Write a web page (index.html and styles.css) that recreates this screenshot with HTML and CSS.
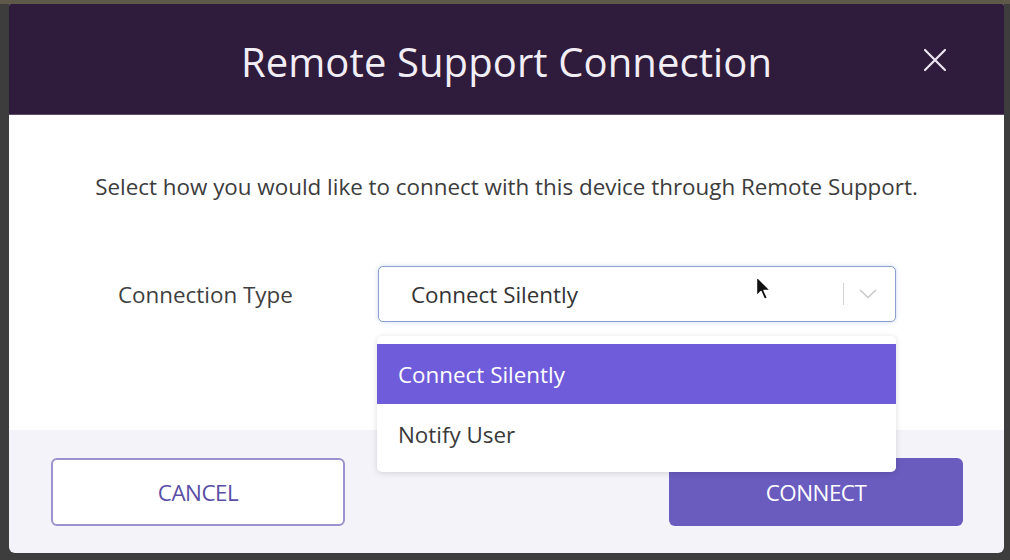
FILE: index.html
```html
<!DOCTYPE html>
<html lang="en">
<head>
    <meta charset="UTF-8">
    <meta name="viewport" content="width=device-width, initial-scale=1.0">
    <title>Remote Support Connection</title>
    <link rel="stylesheet" href="styles.css">
</head>
<body>
    <div class="modal">
        <header class="modal-header">
            <h1>Remote Support Connection</h1>
            <button class="close-btn" aria-label="Close">
                <svg width="24" height="24" viewBox="0 0 24 24">
                    <path d="M2 2 L22 22 M22 2 L2 22" stroke="#ece6f2" stroke-width="2.2" stroke-linecap="round"/>
                </svg>
            </button>
        </header>
        <div class="modal-body">
            <p class="intro">Select how you would like to connect with this device through Remote Support.</p>
            <div class="field-row">
                <label class="field-label">Connection Type</label>
                <div class="select-wrap">
                    <div class="select-box">
                        <span class="select-value">Connect Silently</span>
                        <span class="select-sep"></span>
                        <svg class="chevron" width="18" height="10" viewBox="0 0 18 10">
                            <path d="M1 1 L9 8.5 L17 1" fill="none" stroke="#c9c9c9" stroke-width="1.6"/>
                        </svg>
                    </div>
                    <ul class="select-menu">
                        <li class="option active">Connect Silently</li>
                        <li class="option">Notify User</li>
                    </ul>
                    <svg class="cursor" width="20" height="28" viewBox="0 0 20 28">
                        <path d="M1.5 1.5 L1.5 21 L6 16.5 L9.5 24.5 L12.5 23 L9 15.5 L15.5 15.5 Z" fill="#111" stroke="#fff" stroke-width="1.4" stroke-linejoin="round"/>
                    </svg>
                </div>
            </div>
        </div>
        <footer class="modal-footer">
            <button class="btn btn-cancel">CANCEL</button>
            <button class="btn btn-connect">CONNECT</button>
        </footer>
    </div>
</body>
</html>
```

FILE: styles.css
```css
body {
    margin: 0;
    padding: 4px 6px 7px 9px;
    font-family: "Open Sans", "Noto Sans", sans-serif;
    background: linear-gradient(#5f5949 0, #5f5949 4px, #3d3d3d 4px);
    height: 560px;
    box-sizing: border-box;
    overflow: hidden;
}
.modal {
    width: 995px;
    height: 549px;
    display: flex;
    flex-direction: column;
    background: #f4f3f9;
    border-radius: 2px 2px 6px 6px;
    overflow: hidden;
}
.modal-header {
    height: 110px;
    flex: none;
    background: #2f1b3b;
    border-bottom: 1px solid #5c4a68;
    display: flex;
    align-items: center;
    justify-content: center;
    position: relative;
}
.modal-header h1 {
    margin: 4px 0 0 0;
    font-size: 40px;
    font-weight: 400;
    color: #f2eef6;
    letter-spacing: 0.1px;
}
.close-btn {
    position: absolute;
    right: 57px;
    top: 44px;
    background: none;
    border: none;
    padding: 0;
    width: 24px;
    height: 24px;
}
.modal-body {
    background: #fff;
    height: 315px;
    flex: none;
    display: flex;
    flex-direction: column;
    align-items: center;
}
.intro {
    margin: 56px 0 0 0;
    font-size: 22.4px;
    color: #3c3c3c;
}
.field-row {
    display: flex;
    align-items: center;
    align-self: stretch;
    margin-top: 64px;
    padding-left: 109px;
}
.field-label {
    width: 260px;
    font-size: 22.4px;
    color: #3f3f3f;
}
.select-wrap {
    position: relative;
    width: 518px;
}
.select-box {
    height: 54px;
    border: 1px solid #8aa0d0;
    border-radius: 5px;
    box-shadow: 0 0 4px rgba(110, 140, 210, 0.35);
    display: flex;
    align-items: center;
    padding: 0 18px 0 32px;
    background: #fff;
}
.select-value {
    flex: 1;
    font-size: 22.4px;
    color: #333;
}
.select-sep {
    width: 1px;
    height: 22px;
    background: #d4d4d4;
    margin-right: 15px;
}
.select-menu {
    position: absolute;
    left: -1px;
    top: 70px;
    width: 519px;
    margin: 0;
    padding: 8px 0;
    list-style: none;
    background: #fff;
    border-radius: 5px;
    box-shadow: 0 1px 6px rgba(0, 0, 0, 0.14);
    z-index: 2;
}
.option {
    height: 60px;
    display: flex;
    align-items: center;
    padding-left: 21px;
    font-size: 22.4px;
    color: #3a3a3a;
}
.option.active {
    background: #6f5cdb;
    color: #fff;
}
.cursor {
    position: absolute;
    left: 377px;
    top: 9px;
    z-index: 3;
}
.modal-footer {
    flex: 1;
    display: flex;
    justify-content: space-between;
    align-items: flex-start;
    padding: 28px 41px 0 42px;
}
.btn {
    width: 294px;
    height: 68px;
    border-radius: 6px;
    font-family: "Open Sans", "Noto Sans", sans-serif;
    font-size: 22.4px;
    letter-spacing: -0.5px;
}
.btn-cancel {
    background: #fff;
    border: 2px solid #9b93cf;
    color: #5a4fa6;
}
.btn-connect {
    background: #6a5bbf;
    border: none;
    color: #fff;
}
```
